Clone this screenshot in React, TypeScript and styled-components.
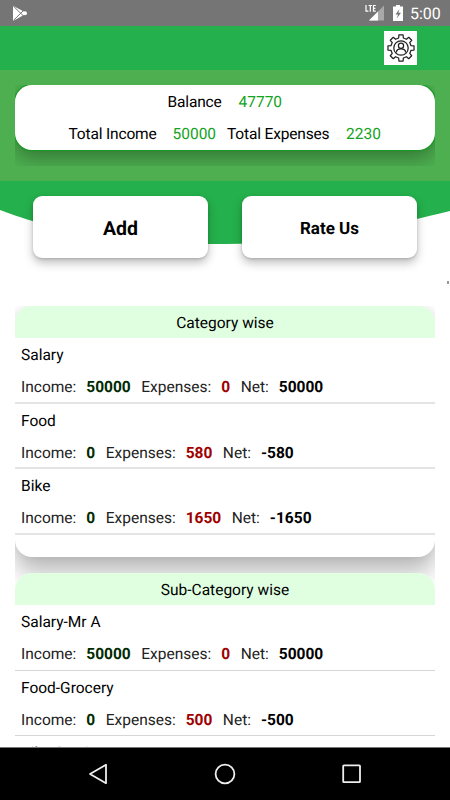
import React from "react";
import styled, { createGlobalStyle } from "styled-components";

const Global = createGlobalStyle`
  * { box-sizing: border-box; }
  html, body { margin: 0; background: #fff; overflow: hidden; }
  body {
    font-family: Roboto, "Liberation Sans", sans-serif;
    font-size: 15.5px;
    color: #000;
    text-rendering: geometricPrecision;
  }
`;

const Screen = styled.div`
  width: 450px;
  height: 800px;
  display: flex;
  flex-direction: column;
  overflow: hidden;
  background: #fff;
`;

const StatusBar = styled.header`
  height: 26px;
  flex: none;
  display: flex;
  align-items: center;
  justify-content: space-between;
  padding: 0 9px 0 12px;
  background: #757575;
  color: #fff;
`;

const StatusIcons = styled.div`
  display: flex;
  align-items: center;
`;

const Clock = styled.span`
  width: 31px;
  margin-left: 5px;
  font-size: 16px;
  line-height: 26px;
  white-space: nowrap;
  padding-top: 2px;
`;

const AppBar = styled.div`
  height: 44px;
  flex: none;
  background: #24b04c;
  display: flex;
  justify-content: flex-end;
  padding: 5px 33px 0 0;
`;

const SettingsButton = styled.button`
  width: 33px;
  height: 34px;
  padding: 0;
  border: 0;
  background: #fff;
  display: grid;
  place-items: center;
`;

const Hero = styled.section`
  height: 111px;
  flex: none;
  padding: 15px 15px 0;
  background: #4daf50;
`;

const ShadowClip = styled.div<{ $height?: number }>`
  overflow: hidden;
  height: ${(p) => (p.$height ? `${p.$height}px` : "auto")};
`;

const BalanceCard = styled.div`
  height: 65px;
  border-radius: 17px;
  background: #fff;
  box-shadow: 0 0 1px 0.5px #169a20, 0 8px 20px rgba(0, 0, 0, 0.32);
`;

const SummaryRow = styled.div<{ $offset: number }>`
  height: 32px;
  display: flex;
  align-items: center;
  padding: 2px 0 0 ${(p) => p.$offset}px;
  line-height: 20px;
  white-space: nowrap;
`;

const SummaryLabel = styled.span<{ $width: number }>`
  width: ${(p) => p.$width}px;
  flex: none;
  letter-spacing: -0.16px;
`;

const SummaryValue = styled(SummaryLabel)`
  color: #14a322;
  letter-spacing: 0;
`;

const Actions = styled.section`
  height: 125px;
  flex: none;
  position: relative;
  display: flex;
  justify-content: space-between;
  padding: 15px 33px 0;
`;

const Wave = styled.svg`
  position: absolute;
  left: 0;
  top: 0;
`;

const ActionButton = styled.button<{ $size: number }>`
  position: relative;
  width: 175px;
  height: 62px;
  padding: 3px 0 0;
  border: 0;
  border-radius: 9px;
  background: #fff;
  color: #000;
  font: 700 ${(p) => p.$size}px Roboto, sans-serif;
  text-rendering: geometricPrecision;
  box-shadow: 0 5px 10px rgba(0, 0, 0, 0.25), 0 1px 3px rgba(0, 0, 0, 0.16);
`;

const List = styled.main`
  flex: 1;
  min-height: 0;
  overflow: hidden;
  padding: 0 15px;
`;

const Card = styled.section`
  border-radius: 17px;
  background: #fff;
  box-shadow: 0 16px 24px rgba(0, 0, 0, 0.27), 0 0 10px rgba(0, 0, 0, 0.08);
`;

const SubCard = styled(Card)`
  position: relative;
  box-shadow: none;
`;

const CardTitle = styled.h2`
  height: 32px;
  margin: 0;
  padding-top: 1px;
  border-radius: 17px 17px 0 0;
  background: #dfffe0;
  font-size: 15.5px;
  font-weight: 400;
  line-height: 32px;
  text-align: center;
`;

const Item = styled.div<{ $line: number }>`
  height: 65.6px;
  border-bottom: ${(p) => p.$line}px solid ${(p) => (p.$line > 1 ? "#e4e4e4" : "#d6d6d6")};
  padding: 1px 0 0 6px;
  line-height: 32px;
`;

const ItemName = styled.div`
  height: 32px;
`;

const Figures = styled.div`
  display: flex;
  height: 32px;
  white-space: nowrap;
`;

const Label = styled.span`
  margin-right: 10px;
  color: #222;
`;

const Amount = styled.strong<{ $color: string }>`
  margin-right: 10.5px;
  font-weight: 700;
  color: ${(p) => p.$color};
`;

const CardEnd = styled.div`
  height: 22.2px;
`;

const NavBar = styled.nav`
  height: 53px;
  flex: none;
  border-top: 1px solid #777;
  background: #000;
  display: flex;
  justify-content: center;
  align-items: center;
  gap: 103px;
`;

type Entry = { name: string; income: string; expenses: string; net: string };

const categories: Entry[] = [
  { name: "Salary", income: "50000", expenses: "0", net: "50000" },
  { name: "Food", income: "0", expenses: "580", net: "-580" },
  { name: "Bike", income: "0", expenses: "1650", net: "-1650" },
];

const subCategories: Entry[] = [
  { name: "Salary-Mr A", income: "50000", expenses: "0", net: "50000" },
  { name: "Food-Grocery", income: "0", expenses: "500", net: "-500" },
  { name: "Bike-Service", income: "0", expenses: "1650", net: "-1650" },
];

function Breakdown({ title, entries, line }: { title: string; entries: Entry[]; line: number }) {
  return (
    <>
      <CardTitle>{title}</CardTitle>
      {entries.map((e) => (
        <Item key={e.name} $line={line}>
          <ItemName>{e.name}</ItemName>
          <Figures>
            <Label>Income:</Label>
            <Amount $color="#002b00">{e.income}</Amount>
            <Label>Expenses:</Label>
            <Amount $color="#a00000">{e.expenses}</Amount>
            <Label>Net:</Label>
            <Amount $color="#000">{e.net}</Amount>
          </Figures>
        </Item>
      ))}
      <CardEnd />
    </>
  );
}

const gearPath = (() => {
  const pts: string[] = [];
  for (let i = 0; i < 8; i++) {
    const a = (i * Math.PI) / 4;
    const at = (r: number, d: number) =>
      `${(16 + r * Math.sin(a + d)).toFixed(2)} ${(16 - r * Math.cos(a + d)).toFixed(2)}`;
    pts.push(at(10.3, -0.23), at(13.2, -0.16), at(13.2, 0.16), at(10.3, 0.23));
  }
  return `M${pts.join("L")}Z`;
})();

export default function App() {
  return (
    <Screen>
      <Global />
      <StatusBar>
        <svg width="16" height="17" viewBox="0 0 16 17">
          <path d="M1 .8 15 8.2 1 15.9Z" fill="#fff" />
          <circle cx="13" cy="8.2" r="2" fill="#fff" />
          <path d="M1.4 1.2 11 10.5M1.4 15.4 11 6" stroke="#757575" strokeWidth="1" />
        </svg>
        <StatusIcons>
          <svg width="40" height="20" viewBox="0 0 40 20">
            <path d="M19 2.5V17.5H4Z" fill="#a9a9a9" />
            <path d="M13 8.5V17.5H4Z" fill="#fff" />
            <path d="M1 2V8.2H3.4M3.6 2.5H7M5.3 2.5V8.7M10.8 2.5H8.5V8.2H10.8M8.5 5.3H10.4" fill="none" stroke="#fff" strokeWidth="1.2" />
            <path d="M29 3.4H31V2H35V3.4H38V18H28V3.4Z" fill="#fff" />
            <path d="M34.4 6 30.5 11.5H33L31.8 15.5 36 9.8H33.4Z" fill="#757575" />
          </svg>
          <Clock>5:00</Clock>
        </StatusIcons>
      </StatusBar>
      <AppBar>
        <SettingsButton aria-label="Settings">
          <svg width="32" height="32" viewBox="0 0 32 32" fill="none" stroke="#222" strokeWidth="1.25" strokeLinejoin="round">
            <path d={gearPath} />
            <circle cx="16" cy="16" r="7.2" />
            <circle cx="16" cy="13.8" r="2.6" />
            <path d="M11.3 20.5C11.5 17.8 13.4 16.9 16 16.9S20.5 17.8 20.7 20.5" />
          </svg>
        </SettingsButton>
      </AppBar>
      <Hero>
        <ShadowClip $height={81}>
          <BalanceCard>
            <SummaryRow $offset={152.5}>
              <SummaryLabel $width={71}>Balance</SummaryLabel>
              <SummaryValue $width={60}>47770</SummaryValue>
            </SummaryRow>
            <SummaryRow $offset={53.5}>
              <SummaryLabel $width={104}>Total Income</SummaryLabel>
              <SummaryValue $width={54.5}>50000</SummaryValue>
              <SummaryLabel $width={119}>Total Expenses</SummaryLabel>
              <SummaryValue $width={50}>2230</SummaryValue>
            </SummaryRow>
          </BalanceCard>
        </ShadowClip>
      </Hero>
      <Actions>
        <Wave width="450" height="125" viewBox="0 0 450 125">
          <path d="M0 0H450V30C397 43 310 63 225 63C145 63 73 57 0 29Z" fill="#24b04c" />
          <rect x="447" y="100" width="2" height="3" fill="#999" />
        </Wave>
        <ActionButton $size={19.5}>Add</ActionButton>
        <ActionButton $size={17}>Rate Us</ActionButton>
      </Actions>
      <List>
        <ShadowClip>
          <Card>
            <Breakdown title="Category wise" entries={categories} line={2} />
          </Card>
          <SubCardGap />
          <SubCard>
            <Breakdown title="Sub-Category wise" entries={subCategories} line={1} />
          </SubCard>
        </ShadowClip>
      </List>
      <NavBar>
        <svg width="24" height="24" viewBox="0 0 24 24" fill="none" stroke="#eee" strokeWidth="1.8" strokeLinejoin="round">
          <path d="M20 2.8V21.2L4 12Z" />
        </svg>
        <svg width="24" height="24" viewBox="0 0 24 24" fill="none" stroke="#eee" strokeWidth="1.8">
          <circle cx="12" cy="12" r="9.4" />
        </svg>
        <svg width="24" height="24" viewBox="0 0 24 24" fill="none" stroke="#eee" strokeWidth="1.8">
          <rect x="3.2" y="3.4" width="16.8" height="16.8" rx="0.7" />
        </svg>
      </NavBar>
    </Screen>
  );
}

const SubCardGap = styled.div`
  height: 16px;
`;
